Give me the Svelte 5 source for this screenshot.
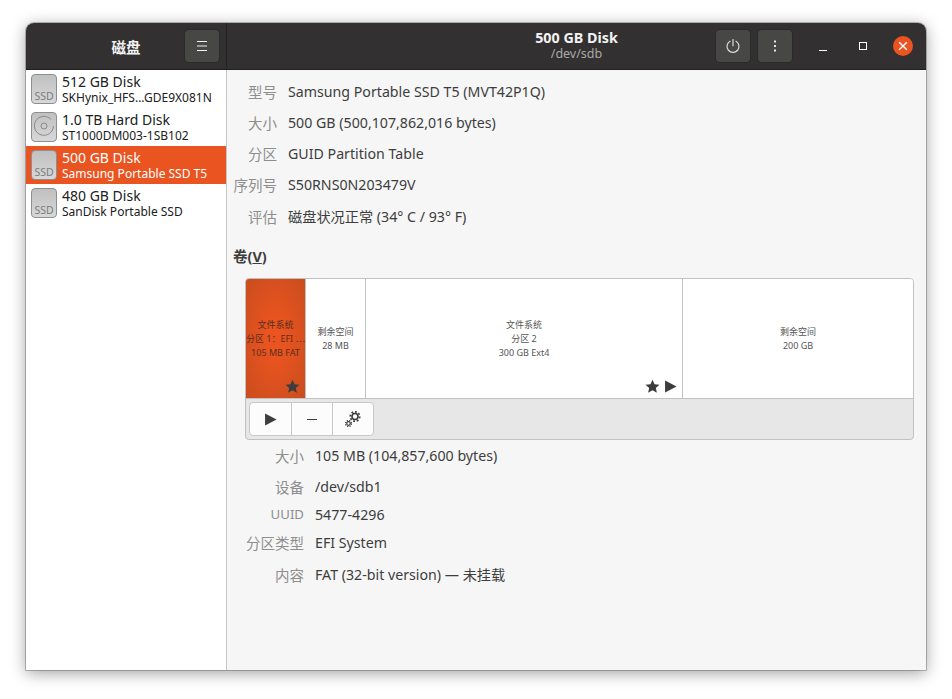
<script lang="ts">
    type Disk = { name: string; model: string; kind: "ssd" | "hdd"; selected?: boolean };
    type Row = { label: string; value: string; height: number };
    type Segment = { lines: string[]; width: number; tone?: string; star?: boolean; play?: boolean };

    const disks: Disk[] = [
        { name: "512 GB Disk", model: "SKHynix_HFS...GDE9X081N", kind: "ssd" },
        { name: "1.0 TB Hard Disk", model: "ST1000DM003-1SB102", kind: "hdd" },
        { name: "500 GB Disk", model: "Samsung Portable SSD T5", kind: "ssd", selected: true },
        { name: "480 GB Disk", model: "SanDisk Portable SSD", kind: "ssd" },
    ];

    const driveRows: Row[] = [
        { label: "型号", value: "Samsung Portable SSD T5 (MVT42P1Q)", height: 31 },
        { label: "大小", value: "500 GB (500,107,862,016 bytes)", height: 31 },
        { label: "分区", value: "GUID Partition Table", height: 31 },
        { label: "序列号", value: "S50RNS0N203479V", height: 31 },
        { label: "评估", value: "磁盘状况正常 (34° C / 93° F)", height: 32 },
    ];

    const segments: Segment[] = [
        { lines: ["文件系统", "分区 1：EFI ⋯", "105 MB FAT"], width: 59, tone: "active", star: true },
        { lines: ["剩余空间", "28 MB"], width: 59 },
        { lines: ["文件系统", "分区 2", "300 GB Ext4"], width: 316, star: true, play: true },
        { lines: ["剩余空间", "200 GB"], width: 230 },
    ];

    const volumeRows: Row[] = [
        { label: "大小", value: "105 MB (104,857,600 bytes)", height: 31 },
        { label: "设备", value: "/dev/sdb1", height: 30 },
        { label: "UUID", value: "5477-4296", height: 26 },
        { label: "分区类型", value: "EFI System", height: 30 },
        { label: "内容", value: "FAT (32-bit version) — 未挂载", height: 34 },
    ];
</script>

{#snippet star(size: number)}
    <svg class="mark" width={size} height={size} viewBox="0 0 14 14">
        <path d="M7 .6l1.9 4.2 4.6.5-3.4 3.1 1 4.5L7 10.6l-4.1 2.3 1-4.5L.5 5.3l4.6-.5z" />
    </svg>
{/snippet}

{#snippet play(size: number)}
    <svg class="mark" width={size} height={size} viewBox="0 0 12 12">
        <path d="M1 .4l10.6 5.6L1 11.6z" />
    </svg>
{/snippet}

<div class="page">
    <div class="window">
        <header class="titlebar">
            <div class="title-left">
                <span class="app-title">磁盘</span>
                <button class="hb-btn menu-btn" type="button" aria-label="菜单">
                    <svg width="16" height="16" viewBox="0 0 16 16">
                        <path d="M3 3.5h10M3 8h10M3 12.5h10" stroke="#f2f2f0" stroke-width="1" fill="none" />
                    </svg>
                </button>
            </div>
            <div class="title-right">
                <div class="title-center">
                    <strong>500 GB Disk</strong>
                    <span>/dev/sdb</span>
                </div>
                <button class="hb-btn" type="button" aria-label="电源">
                    <svg width="16" height="16" viewBox="0 0 16 16" fill="none" stroke="#dcdcda" stroke-width="1.2" stroke-linecap="round">
                        <path d="M8 1.6v6.2" />
                        <path d="M5 3.2a6 6 0 1 0 6 0" />
                    </svg>
                </button>
                <button class="hb-btn dots-btn" type="button" aria-label="更多">
                    <svg width="16" height="16" viewBox="0 0 16 16" fill="#e6e6e4">
                        <rect x="7" y="2.5" width="2" height="2" />
                        <rect x="7" y="7" width="2" height="2" />
                        <rect x="7" y="11.5" width="2" height="2" />
                    </svg>
                </button>
                <div class="win-controls">
                    <svg width="16" height="16" viewBox="0 0 16 16"><path d="M4 12.5h8" stroke="#fff" stroke-width="1" /></svg>
                    <svg width="16" height="16" viewBox="0 0 16 16"><rect x="4.5" y="4.5" width="7" height="7" fill="none" stroke="#fff" stroke-width="1" /></svg>
                    <span class="close">
                        <svg width="20" height="20" viewBox="0 0 20 20"><path d="M6.2 6.2l7.6 7.6M13.8 6.2l-7.6 7.6" stroke="#fff" stroke-width="1.4" /></svg>
                    </span>
                </div>
            </div>
        </header>

        <div class="body">
            <aside class="sidebar">
                {#each disks as disk}
                    <div class="disk" class:selected={disk.selected}>
                        <div class="disk-icon">
                            {#if disk.kind === "ssd"}
                                <span>SSD</span>
                            {:else}
                                <svg width="26" height="26" viewBox="0 0 26 26" fill="none" stroke="#8a8a8a" stroke-width="1">
                                    <path d="M20 6.5a9.5 9.5 0 1 0 2.4 6.5" />
                                    <circle cx="13" cy="13" r="3" />
                                </svg>
                            {/if}
                        </div>
                        <div class="disk-text">
                            <div class="disk-name">{disk.name}</div>
                            <div class="disk-model">{disk.model}</div>
                        </div>
                    </div>
                {/each}
            </aside>

            <main class="content">
                <section class="props drive-props">
                    {#each driveRows as row}
                        <div class="prop" style:height="{row.height}px">
                            <span class="prop-label">{row.label}</span>
                            <span class="prop-value">{row.value}</span>
                        </div>
                    {/each}
                </section>

                <h2 class="section-title">卷(<u>V</u>)</h2>

                <div class="volumes">
                    <div class="segments">
                        {#each segments as seg}
                            <div class="segment" class:active={seg.tone === "active"} style:width="{seg.width}px">
                                <div class="seg-text">
                                    {#each seg.lines as line}
                                        <div>{line}</div>
                                    {/each}
                                </div>
                                {#if seg.star || seg.play}
                                    <div class="seg-marks">
                                        {#if seg.star}{@render star(15)}{/if}
                                        {#if seg.play}{@render play(13)}{/if}
                                    </div>
                                {/if}
                            </div>
                        {/each}
                    </div>
                    <div class="toolbar">
                        <div class="tool-group">
                            <button type="button" aria-label="挂载">{@render play(13)}</button>
                            <button type="button" aria-label="删除">
                                <svg width="12" height="12" viewBox="0 0 12 12"><path d="M1 6.5h10" stroke="#3d3d3d" stroke-width="1" /></svg>
                            </button>
                            <button type="button" aria-label="设置">
                                <svg width="18" height="18" viewBox="0 0 18 18" fill="none" stroke="#3d3d3d">
                                    <circle cx="11" cy="6.5" r="3" stroke-width="1.6" />
                                    <circle cx="11" cy="6.5" r="4.7" stroke-width="1.8" stroke-dasharray="1.8 1.8" />
                                    <circle cx="4.5" cy="13.5" r="1.8" stroke-width="1.2" />
                                    <circle cx="4.5" cy="13.5" r="3" stroke-width="1.2" stroke-dasharray="1.2 1.2" />
                                </svg>
                            </button>
                        </div>
                    </div>
                </div>

                <section class="props volume-props">
                    {#each volumeRows as row}
                        <div class="prop" style:height="{row.height}px">
                            <span class="prop-label" class:latin={row.label === "UUID"}>{row.label}</span>
                            <span class="prop-value">{row.value}</span>
                        </div>
                    {/each}
                </section>
            </main>
        </div>
    </div>
</div>

<style>
    :global(body) {
        background: #fff;
    }

    .page {
        width: 952px;
        height: 699px;
        box-sizing: border-box;
        padding: 23px 26px 29px;
        overflow: hidden;
        font-family: "Noto Sans", "Noto Sans CJK SC", sans-serif;
    }

    .window {
        height: 647px;
        display: flex;
        flex-direction: column;
        border-radius: 8px 8px 0 0;
        overflow: hidden;
        background: #f6f6f6;
        box-shadow:
            0 0 0 1px rgba(0, 0, 0, 0.23),
            0 3px 16px rgba(0, 0, 0, 0.38);
    }

    .titlebar {
        height: 46px;
        flex: none;
        display: flex;
        background: #323030;
        border-bottom: 1px solid #201f1f;
        box-sizing: content-box;
    }

    .title-left {
        width: 200px;
        flex: none;
        display: flex;
        align-items: center;
        border-right: 1px solid #232222;
        position: relative;
    }

    .app-title {
        width: 200px;
        text-align: center;
        color: #f2f2f2;
        font-size: 14.5px;
        font-weight: 700;
    }

    .hb-btn {
        width: 34px;
        height: 32px;
        padding: 0;
        border: 0;
        border-radius: 4px;
        background: #474745;
        display: flex;
        align-items: center;
        justify-content: center;
        box-shadow: 0 0 0 1px #2c2b2b;
    }

    .menu-btn {
        position: absolute;
        left: 159px;
        top: 7px;
    }

    .title-right {
        flex: 1;
        display: flex;
        align-items: center;
        position: relative;
    }

    .title-center {
        position: absolute;
        left: 0;
        right: 0;
        display: flex;
        flex-direction: column;
        align-items: center;
        color: #f2f2f2;
        line-height: 16px;
        pointer-events: none;
    }

    .title-center strong {
        font-size: 14.3px;
        font-weight: 700;
    }

    .title-center span {
        font-size: 12.5px;
        color: #a9a9a8;
    }

    .title-right .hb-btn:first-of-type {
        margin-left: 489px;
    }

    .dots-btn {
        margin-left: 8px;
    }

    .win-controls {
        display: flex;
        align-items: center;
        margin-left: 23px;
        gap: 24px;
    }

    .close {
        width: 20px;
        height: 20px;
        border-radius: 50%;
        background: #e95420;
        display: block;
        margin-left: -2px;
    }

    .close svg {
        display: block;
    }

    .body {
        flex: 1;
        min-height: 0;
        display: flex;
    }

    .sidebar {
        width: 200px;
        flex: none;
        background: #fff;
        border-right: 1px solid #c5c5c5;
    }

    .disk {
        height: 38px;
        display: flex;
        align-items: center;
        padding-left: 5px;
        color: #202020;
    }

    .disk.selected {
        background: #e95420;
        color: #fff;
    }

    .disk-icon {
        width: 26px;
        height: 30px;
        flex: none;
        box-sizing: border-box;
        border: 1px solid #8e8e8e;
        border-radius: 4px;
        background: linear-gradient(180deg, #c0c0c0, #d8d8d8);
        display: flex;
        align-items: flex-end;
        justify-content: center;
        overflow: hidden;
    }

    .disk-icon span {
        font-size: 10.5px;
        line-height: 13px;
        color: #7c7c7c;
    }

    .disk-icon svg {
        flex: none;
        margin-bottom: 2px;
    }

    .disk-text {
        margin-left: 5px;
        padding-top: 2px;
        white-space: nowrap;
    }

    .disk-name {
        font-size: 14px;
        line-height: 15px;
    }

    .disk-model {
        font-size: 12px;
        line-height: 17px;
    }

    .content {
        flex: 1;
        min-width: 0;
        padding: 6px 12px 0 6px;
    }

    .prop {
        display: flex;
        align-items: center;
        color: #3d3d3d;
        font-size: 14.2px;
    }

    .prop-label {
        flex: none;
        text-align: right;
        color: #8e8e8e;
        font-size: 14.5px;
    }

    .prop-label.latin {
        font-size: 13.2px;
    }

    .prop-value {
        margin-left: 11px;
        white-space: nowrap;
    }

    .drive-props .prop-label {
        width: 44px;
    }

    .volume-props .prop-label {
        width: 71px;
    }

    .section-title {
        margin: 14px 0 0;
        font-size: 14.5px;
        font-weight: 700;
        line-height: 20px;
        color: #3d3d3d;
    }

    .volumes {
        margin: 12px 0 0 12px;
        width: 669px;
        box-sizing: border-box;
        border: 1px solid #c1c1c1;
        border-radius: 4px;
        overflow: hidden;
        background: #e7e7e7;
    }

    .segments {
        height: 119px;
        display: flex;
        border-bottom: 1px solid #c1c1c1;
    }

    .segment {
        flex: none;
        box-sizing: content-box;
        position: relative;
        background: #fff;
        display: flex;
        align-items: center;
        justify-content: center;
        border-left: 1px solid #c1c1c1;
        color: #555;
        font-size: 9px;
        line-height: 14px;
        text-align: center;
    }

    .segment:first-child {
        border-left: 0;
    }

    .segment.active {
        background: radial-gradient(ellipse at center, #ea5420 20%, #c94d1e 100%);
        color: #5a2f1c;
    }

    .seg-text {
        white-space: nowrap;
    }

    .seg-marks {
        position: absolute;
        right: 5px;
        bottom: 4px;
        display: flex;
        align-items: center;
        gap: 4px;
    }

    .mark {
        display: block;
        fill: #3d3d3d;
    }

    .toolbar {
        height: 40px;
        display: flex;
        align-items: center;
        padding-left: 3px;
    }

    .tool-group {
        display: flex;
        height: 34px;
        box-sizing: border-box;
        border: 1px solid #c8c8c8;
        border-radius: 4px;
        overflow: hidden;
        background: #fcfcfc;
    }

    .tool-group button {
        width: 41px;
        padding: 0;
        border: 0;
        border-left: 1px solid #c8c8c8;
        background: transparent;
        display: flex;
        align-items: center;
        justify-content: center;
    }

    .tool-group button:first-child {
        border-left: 0;
    }
</style>
